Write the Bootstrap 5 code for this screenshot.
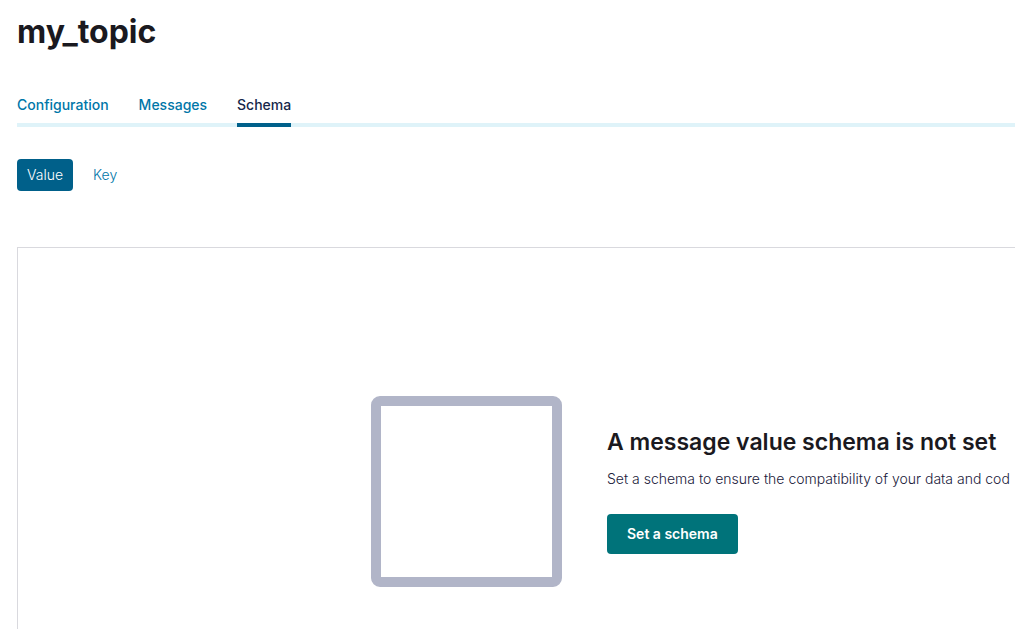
<!DOCTYPE html>
<html lang="en">
<head>
<meta charset="utf-8">
<meta name="viewport" content="width=device-width, initial-scale=1">
<title>my_topic</title>
<link href="https://cdn.jsdelivr.net/npm/bootstrap@5.3.0/dist/css/bootstrap.min.css" rel="stylesheet">
<style>
body { font-family: Inter, "Liberation Sans", sans-serif; font-size: 14px; line-height: 20px; color: #20203a; font-weight: 300; overflow-x: hidden; }
.page { padding: 12px 0 0 17px; }
.topic-title { font-size: 32px; line-height: 40px; font-weight: 700; color: #1a1920; }
.topic-tabs { gap: 30px; margin-top: 43px; border-bottom: 4px solid #dff3f9; }
.topic-tabs .nav-link { padding: 0 0 8px; margin-bottom: -4px; border-bottom: 4px solid transparent; color: #0076a8; font-weight: 500; }
.topic-tabs .nav-link.active { color: #16274a; border-color: #00608a; }
.kind-pills { gap: 10px; margin-top: 32px; }
.kind-pills .nav-link { padding: 6px 10px; border-radius: 4px; color: #0076a8; }
.kind-pills .nav-link.active { background: #00608a; color: #fff; }
.empty-panel { margin-top: 56px; border: 1px solid #d9d9de; border-width: 1px 0 0 1px; }
.empty-state { gap: 45px; margin: 148px 0 16px 353px; }
.placeholder-art { width: 191px; height: 191px; }
.empty-copy { padding-top: 30px; }
.empty-title { font-size: 23px; line-height: 32px; font-weight: 600; margin-bottom: 11px; color: #1a1920; }
.btn-schema { margin-top: 25px; padding: 10px 20px; line-height: 20px; font-size: 14px; font-weight: 600; border: 0; border-radius: 4px; color: #fff; background: #00737a; }
.btn-schema:hover { color: #fff; background: #005e63; }
</style>
</head>
<body>
<main class="page d-flex flex-column min-vh-100">
  <h1 class="topic-title mb-0">my_topic</h1>
  <nav class="nav topic-tabs" aria-label="Topic">
    <a class="nav-link" href="#configuration">Configuration</a>
    <a class="nav-link" href="#messages">Messages</a>
    <a class="nav-link active" aria-current="page" href="#schema">Schema</a>
  </nav>
  <nav class="nav nav-pills kind-pills" aria-label="Schema kind">
    <a class="nav-link active" aria-current="page" href="#value">Value</a>
    <a class="nav-link" href="#key">Key</a>
  </nav>
  <section class="empty-panel flex-grow-1">
    <div class="empty-state d-flex align-items-start">
      <svg class="placeholder-art flex-shrink-0" viewBox="0 0 191 191" aria-hidden="true"><path fill="#b1b5c8" fill-rule="evenodd" d="M9 0H182A9 9 0 0 1 191 9V182A9 9 0 0 1 182 191H9A9 9 0 0 1 0 182V9A9 9 0 0 1 9 0ZM10 10V181H181V10Z"/></svg>
      <div class="empty-copy text-nowrap">
        <h2 class="empty-title">A message value schema is not set</h2>
        <p class="mb-0">Set a schema to ensure the compatibility of your data and cod</p>
        <button type="button" class="btn btn-schema">Set a schema</button>
      </div>
    </div>
  </section>
</main>
</body>
</html>
